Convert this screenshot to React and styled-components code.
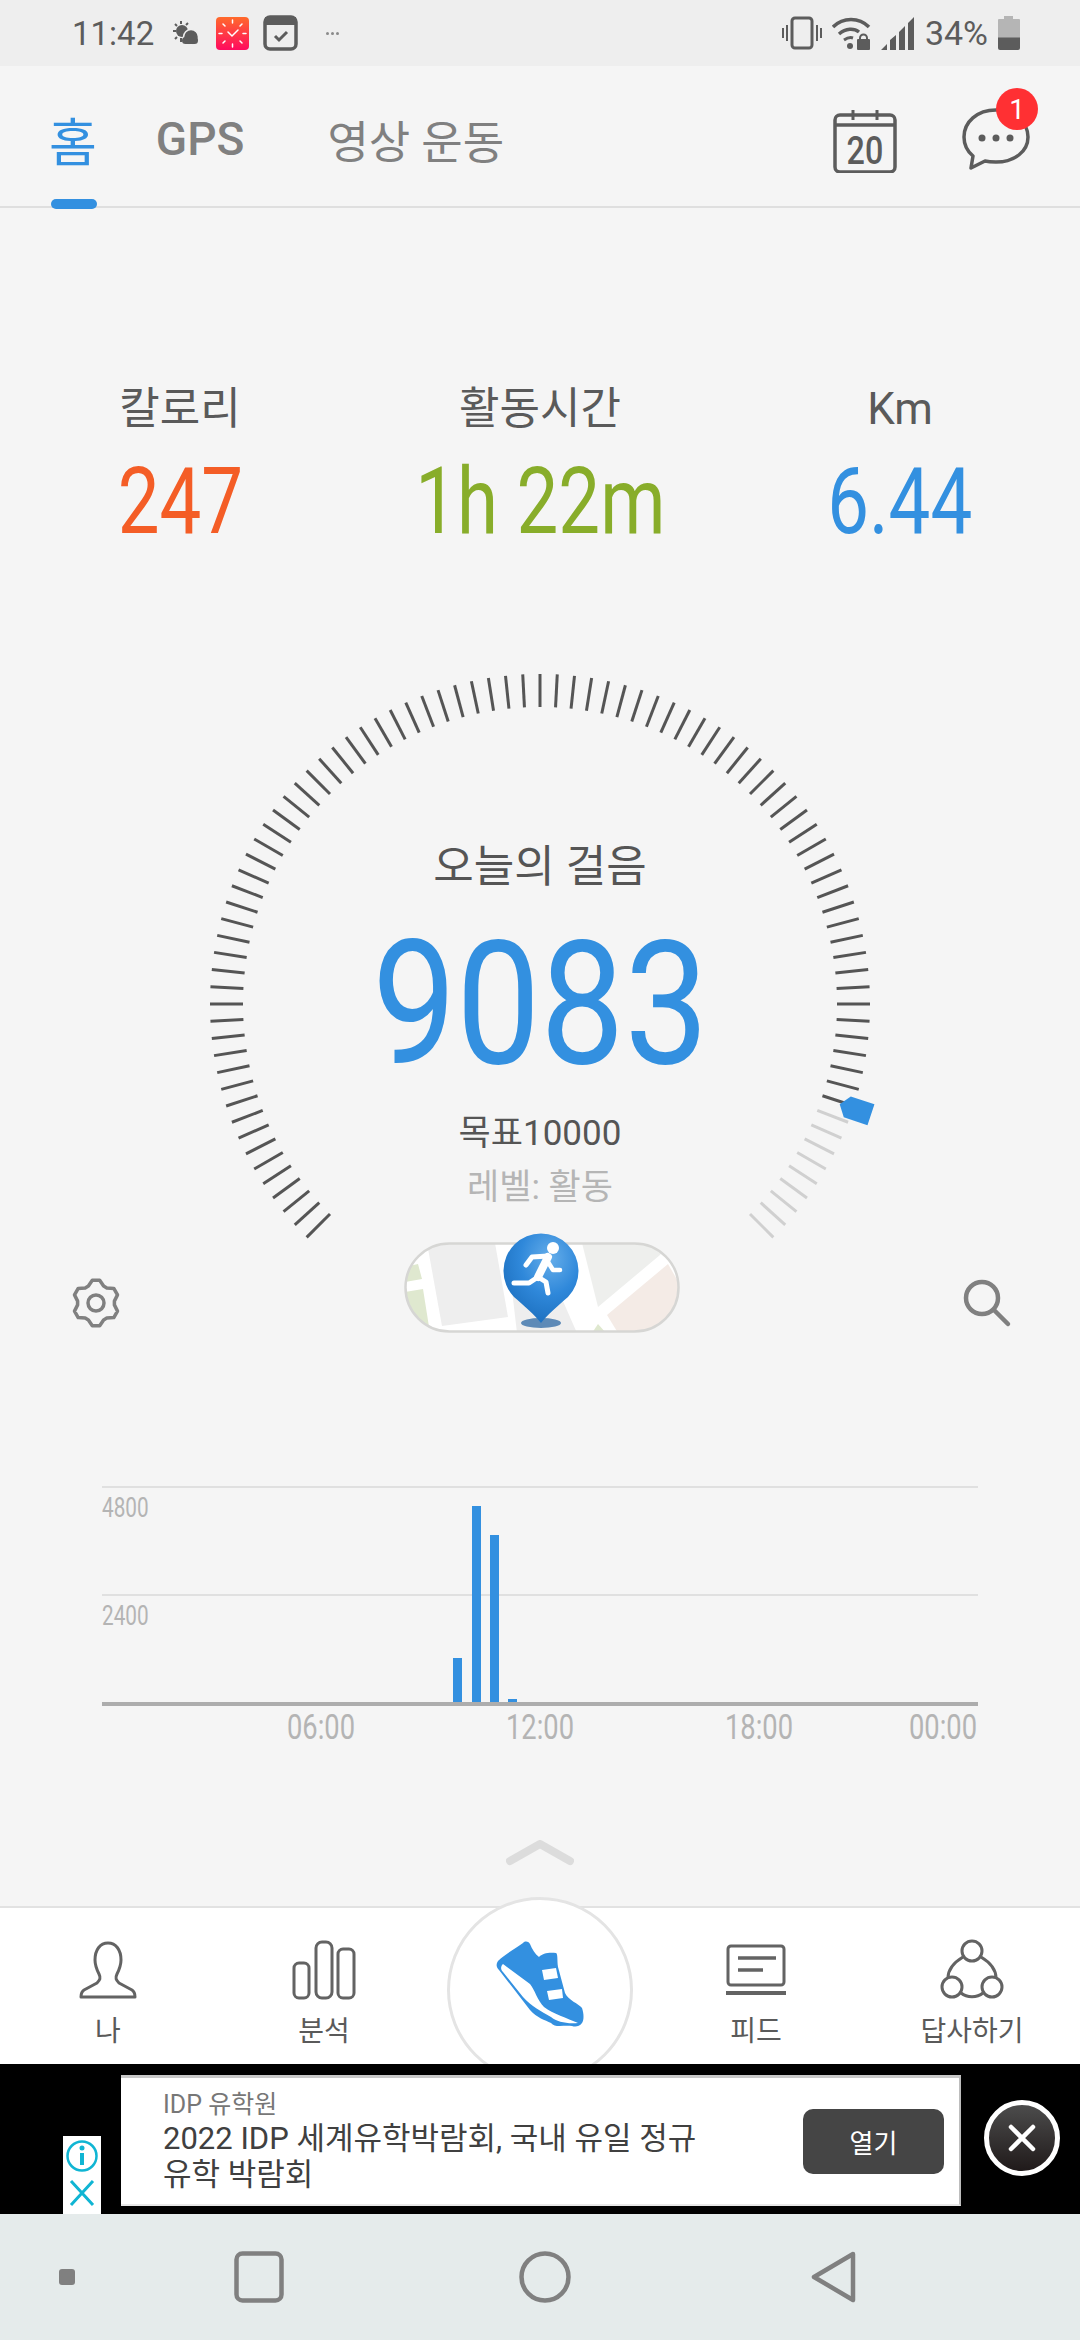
import React from "react"
import styled, { createGlobalStyle } from "styled-components"

const BLUE = "#3390e0"
const BARS = { 19: 44, 20: 196, 21: 167, 22: 3 }

const ticks = Array.from({ length: 91 }, (_, i) => i)

function gearPath() {
    // six soft teeth, like the settings cog in the app
    const pts = []
    for (let i = 0; i < 6; i++) {
        const a = (i * 60 - 90) * Math.PI / 180
        const step = 11 * Math.PI / 180
        pts.push([a - 2.2 * step, 18.5], [a - 0.85 * step, 23], [a + 0.85 * step, 23], [a + 2.2 * step, 18.5])
    }
    return pts.map(([a, r], i) => `${i ? "L" : "M"}${(25 + r * Math.cos(a)).toFixed(1)} ${(25 + r * Math.sin(a)).toFixed(1)}`).join(" ") + " Z"
}

export default function App() {
    return (
        <>
            <GlobalStyle />
            <Screen>
                <StatusBar>
                    <StatusGroup>
                        <Clock>11:42</Clock>
                        <svg width="28" height="26" viewBox="0 0 28 26" fill="#5c5c5c">
                            <circle cx="10" cy="11" r="6" />
                            <path d="M9 1v3M1 11h3M3 4l2 2M3 19l2-2M16 3l-2 2M9 18v4" stroke="#5c5c5c" strokeWidth="2" />
                            <circle cx="19" cy="17" r="7.5" stroke="#eee" strokeWidth="1.5" />
                            <rect x="10" y="17" width="16" height="7" rx="3.5" />
                        </svg>
                        <ClockApp>
                            <svg width="33" height="33" viewBox="0 0 33 33" fill="none" stroke="#fff" strokeLinecap="round">
                                <path d="M16.5 3v3M16.5 27v3M3 16.5h3M27 16.5h3M7 7l2 2M26 7l-2 2M7 26l2-2M26 26l-2-2" strokeWidth="1.5" />
                                <path d="M12 15l4 4 6-6" strokeWidth="1.5" />
                            </svg>
                        </ClockApp>
                        <svg width="35" height="36" viewBox="0 0 35 36" fill="none">
                            <rect x="2" y="2" width="31" height="32" rx="5" stroke="#5c5c5c" strokeWidth="3.5" />
                            <rect x="2" y="2" width="31" height="8" fill="#5c5c5c" />
                            <path d="M12 21l4 4 8-8" stroke="#5c5c5c" strokeWidth="3" />
                        </svg>
                        <MoreDots>
                            <span /><span /><span />
                        </MoreDots>
                    </StatusGroup>
                    <StatusGroup>
                        <svg width="40" height="34" viewBox="0 0 40 34" fill="none" stroke="#5c5c5c">
                            <rect x="10" y="2" width="20" height="30" rx="3" strokeWidth="3" />
                            <path d="M5 9v16M1 12v10M35 9v16M39 12v10" strokeWidth="2" />
                        </svg>
                        <svg width="39" height="34" viewBox="0 0 39 34" fill="none" stroke="#5c5c5c">
                            <path d="M1 11C11 1 27 1 37 11" strokeWidth="3.5" />
                            <path d="M7 18c7-6 15-6 20-2" strokeWidth="3.5" />
                            <path d="M12 24c3-2 6-3 9-2" strokeWidth="3" />
                            <circle cx="18" cy="30" r="3" fill="#5c5c5c" stroke="none" />
                            <rect x="25" y="23" width="13" height="11" rx="1" fill="#5c5c5c" stroke="none" />
                            <path d="M28 24v-2a3.500 3.500 0 0 1 7 0v2" strokeWidth="2" />
                        </svg>
                        <svg width="34" height="34" viewBox="0 0 34 34" fill="#5c5c5c">
                            <path d="M0 34l6-6v6zM9 34V24l6-5v15zM18 34V16l6-6v24zM27 34V7l6-6v33z" />
                        </svg>
                        <Percent>34%</Percent>
                        <svg width="22" height="34" viewBox="0 0 22 34">
                            <path d="M6 0h9v3h6a1 1 0 0 1 1 1v18H0V4a1 1 0 0 1 1-1h5z" fill="#b5b5b5" />
                            <path d="M0 21.500h22V32a2 2 0 0 1-2 2H2a2 2 0 0 1-2-2z" fill="#5c5c5c" />
                        </svg>
                    </StatusGroup>
                </StatusBar>

                <Header>
                    <Tab $active>홈</Tab>
                    <Tab $bold>GPS</Tab>
                    <Tab $wide>영상 운동</Tab>
                    <HeaderActions>
                        <CalendarIcon width="64" height="64" viewBox="0 0 64 64" fill="none" stroke="#5c5c5c" strokeWidth="3.5">
                            <path d="M7 6h50a5 5 0 0 1 5 5v47a5 5 0 0 1-5 5H7a5 5 0 0 1-5-5V11a5 5 0 0 1 5-5z" />
                            <path d="M2 16h60" />
                            <path d="M20 1v10M44 1v10" strokeWidth="3" />
                            <text x="37.600" y="55" textAnchor="middle" fill="#5c5c5c" stroke="none" fontFamily="Roboto" fontWeight="500" fontSize="38" transform="scale(.85 1)">20</text>
                        </CalendarIcon>
                        <ChatButton>
                            <svg width="68" height="62" viewBox="0 0 68 62" fill="none" stroke="#5c5c5c" strokeWidth="3.5">
                                <path d="M34 2C15 2 2 14 2 29c0 8 3 14 9 19l-2 12 14-7c4 1 7 1 11 1 19 0 32-11 32-25S53 2 34 2z" strokeLinejoin="round" />
                                <circle cx="20" cy="30" r="3.500" fill="#5c5c5c" stroke="none" />
                                <circle cx="34" cy="30" r="3.500" fill="#5c5c5c" stroke="none" />
                                <circle cx="48" cy="30" r="3.500" fill="#5c5c5c" stroke="none" />
                            </svg>
                            <Badge>1</Badge>
                        </ChatButton>
                    </HeaderActions>
                </Header>

                <Main>
                    <Stats>
                        <Stat>
                            <StatLabel>칼로리</StatLabel>
                            <StatValue $color="#f45d26">247</StatValue>
                        </Stat>
                        <Stat>
                            <StatLabel>활동시간</StatLabel>
                            <StatValue $color="#88ad2a">1h 22m</StatValue>
                        </Stat>
                        <Stat>
                            <StatLabel>Km</StatLabel>
                            <StatValue $color={BLUE}>6.44</StatValue>
                        </Stat>
                    </Stats>

                    <Gauge>
                        <GaugeDial width="720" height="720" viewBox="-360 -360 720 720">
                            {ticks.map(i => (
                                <line
                                    key={i}
                                    x1="0" y1="-297" x2="0" y2="-330"
                                    stroke={i <= 81 ? "#555555" : "#d0d0d0"}
                                    strokeWidth="3"
                                    transform={`rotate(${i * 3 - 135})`}
                                />
                            ))}
                            <polygon points="316,0 324,-11 349,-11 349,11 324,11" fill={BLUE} transform="rotate(18.5)" />
                        </GaugeDial>
                        <GaugeTitle>오늘의 걸음</GaugeTitle>
                        <StepCount>9083</StepCount>
                        <Goal>목표10000</Goal>
                        <Level>레벨: 활동</Level>
                        <ToolRow>
                            <IconSlot>
                                <svg width="50" height="50" viewBox="0 0 50 50" fill="none" stroke="#808080" strokeWidth="3.5" strokeLinejoin="round">
                                    <path d={gearPath()} />
                                    <circle cx="25" cy="25" r="8" />
                                </svg>
                            </IconSlot>
                            <svg width="276" height="102" viewBox="0 0 276 102">
                                <defs>
                                    <clipPath id="pill"><rect x="1" y="11" width="274" height="89" rx="44" /></clipPath>
                                    <radialGradient id="pin" cx="0.62" cy="0.28" r="0.8">
                                        <stop offset="0" stopColor="#66aeea" />
                                        <stop offset="0.5" stopColor="#2f88da" />
                                        <stop offset="1" stopColor="#1a6cbb" />
                                    </radialGradient>
                                </defs>
                                <g clipPath="url(#pill)">
                                    <rect x="0" y="10" width="276" height="92" fill="#fff" />
                                    <g transform="translate(1 11)">
                                        <polygon points="22,0 90,0 103,74 37,83" fill="#eeeeee" />
                                        <polygon points="0,24 13,21 17,36 0,39" fill="#dfe8cf" />
                                        <polygon points="0,49 18,46 25,90 0,90" fill="#dfe8cf" />
                                        <polygon points="177,0 263,0 255,12 193,64" fill="#eeefed" />
                                        <polygon points="263,21 274,40 274,90 213,90 202,72" fill="#f4ebe6" />
                                        <polygon points="105,30 150,40 172,90 112,90" fill="#eeeeee" />
                                        <polygon points="187,90 193,81 201,90" fill="#dfe8cf" />
                                    </g>
                                </g>
                                <rect x="1.500" y="11.500" width="273" height="88" rx="44" fill="none" stroke="#d6d6d4" strokeWidth="2.5" />
                                <ellipse cx="137" cy="91" rx="20" ry="5" fill="#1f5f9f" opacity="0.7" />
                                <path d="M137 91C132 84 118 72 110 65A37.500 37.500 0 1 1 164 65C156 72 142 84 137 91Z" fill="url(#pin)" />
                                <g fill="none" stroke="#fff" strokeLinecap="round" strokeLinejoin="round">
                                    <circle cx="149" cy="16" r="6" fill="#fff" stroke="none" />
                                    <path d="M144 25L134 45" strokeWidth="8" />
                                    <path d="M122 33L128 25L144 24" strokeWidth="5" />
                                    <path d="M144 30L149 38L156 38" strokeWidth="4.500" />
                                    <path d="M134 45L125 51L110 51" strokeWidth="5" />
                                    <path d="M134 45L142 50L144 61" strokeWidth="5" />
                                </g>
                            </svg>
                            <IconSlot>
                                <svg width="50" height="50" viewBox="0 0 50 50" fill="none" stroke="#808080" strokeWidth="4.500" strokeLinecap="round">
                                    <circle cx="20" cy="20" r="16" />
                                    <path d="M32 32l14 14" />
                                </svg>
                            </IconSlot>
                        </ToolRow>
                    </Gauge>

                    <Chart>
                        <Plot>
                            <PlotRow><AxisValue>4800</AxisValue></PlotRow>
                            <PlotRow><AxisValue>2400</AxisValue></PlotRow>
                            <BarLayer>
                                {Array.from({ length: 48 }, (_, i) => (
                                    <BarSlot key={i}>
                                        {BARS[i] ? <Bar $h={BARS[i]} /> : null}
                                    </BarSlot>
                                ))}
                            </BarLayer>
                        </Plot>
                        <TimeAxis>
                            <TimeCell>06:00</TimeCell>
                            <TimeCell>12:00</TimeCell>
                            <TimeCell>18:00</TimeCell>
                            <TimeCell $last>00:00</TimeCell>
                        </TimeAxis>
                    </Chart>

                    <Chevron>
                        <svg width="68" height="26" viewBox="0 0 68 26" fill="none" stroke="#dcdcdc" strokeWidth="8" strokeLinecap="round" strokeLinejoin="round">
                            <path d="M4 21L34 4L64 21" />
                        </svg>
                    </Chevron>
                </Main>

                <BottomNav>
                    <NavItem>
                        <NavIcon>
                            <svg width="58" height="58" viewBox="0 0 58 58" fill="none" stroke="#636363" strokeWidth="3">
                                <path d="M29 2c-8 0-13 7-13 17 0 6 2 10 4 14 2 4 1 6-2 9L5 49c-3 2-3 4-3 7h54c0-3 0-5-3-7l-13-7c-3-3-4-5-2-9 2-4 4-8 4-14C42 9 37 2 29 2z" strokeLinejoin="round" />
                            </svg>
                        </NavIcon>
                        <NavLabel>나</NavLabel>
                    </NavItem>
                    <NavItem>
                        <NavIcon>
                            <svg width="64" height="60" viewBox="0 0 64 60" fill="none" stroke="#636363" strokeWidth="3">
                                <rect x="2" y="23" width="15" height="35" rx="5" />
                                <rect x="24" y="2" width="16" height="56" rx="6" />
                                <rect x="46" y="9" width="16" height="49" rx="5" />
                            </svg>
                        </NavIcon>
                        <NavLabel>분석</NavLabel>
                    </NavItem>
                    <NavItem>
                        <RingButton />
                        <ShoeIcon width="90" height="90" viewBox="0 0 90 90">
                            <path d="M28 3C30 1 33 1 35 4C37 9 40 14 44 17C47 13 55 12 61 13C63 14 62 20 63 27L70 53C73 60 84 64 87 68C89 74 89 80 87 83C84 87 80 87 77 86C68 85 60 88 56 83C50 80 42 78 35 70L4 30C1 27 1 24 3 21C10 14 20 9 28 3Z" fill={BLUE} />
                            <path d="M8 24L35 44C40 50 42 60 49 67C58 74 72 78 83 83C72 84 62 82 56 77C47 72 36 66 28 57L8 32C5 29 6 26 8 24Z" fill="#fff" />
                            <path d="M47 30L61 28L63 38L49 40Z M52 51L67 49L68 58L54 60Z" fill="#fff" />
                        </ShoeIcon>
                    </NavItem>
                    <NavItem>
                        <NavIcon>
                            <svg width="60" height="52" viewBox="0 0 60 52" fill="none" stroke="#636363" strokeWidth="3">
                                <rect x="2" y="2" width="56" height="39" rx="3" />
                                <path d="M12 14h38" strokeWidth="3.500" />
                                <path d="M12 26h25" strokeWidth="3.500" />
                                <path d="M0 49h60" strokeWidth="4" />
                            </svg>
                        </NavIcon>
                        <NavLabel>피드</NavLabel>
                    </NavItem>
                    <NavItem>
                        <NavIcon>
                            <svg width="66" height="62" viewBox="0 0 66 62" fill="none" stroke="#636363" strokeWidth="3">
                                <circle cx="33" cy="12" r="10" />
                                <circle cx="13" cy="48" r="10" />
                                <circle cx="53" cy="48" r="10" />
                                <path d="M24 18C14 24 9 32 9 39M42 18C52 24 57 32 57 39M22 54C28 59 38 59 44 54" />
                            </svg>
                        </NavIcon>
                        <NavLabel>답사하기</NavLabel>
                    </NavItem>
                </BottomNav>

                <AdBar>
                    <AdInfo>
                        <svg width="34" height="34" viewBox="0 0 34 34" fill="none" stroke="#10b5d3" strokeWidth="2.500">
                            <circle cx="17" cy="17" r="14.500" />
                            <path d="M17 14v12" strokeWidth="4" />
                            <circle cx="17" cy="9" r="2.500" fill="#10b5d3" stroke="none" />
                        </svg>
                        <svg width="28" height="28" viewBox="0 0 28 28" fill="none" stroke="#10b5d3" strokeWidth="3">
                            <path d="M3 2l22 24M25 2L3 26" />
                        </svg>
                    </AdInfo>
                    <AdCard>
                        <AdCopy>
                            <AdSource>IDP 유학원</AdSource>
                            <AdTitle>2022 IDP 세계유학박람회, 국내 유일 정규<br />유학 박람회</AdTitle>
                        </AdCopy>
                        <AdButton>열기</AdButton>
                    </AdCard>
                    <AdClose>
                        <svg width="36" height="36" viewBox="0 0 36 36" fill="none" stroke="#fff" strokeWidth="4.500" strokeLinecap="round">
                            <path d="M7 7l22 22M29 7L7 29" />
                        </svg>
                    </AdClose>
                </AdBar>

                <SystemNav>
                    <RecentDot />
                    <svg width="50" height="52" viewBox="0 0 50 52" fill="none" stroke="#808080" strokeWidth="4.500">
                        <rect x="2.500" y="2.500" width="45" height="47" rx="6" />
                    </svg>
                    <svg width="52" height="52" viewBox="0 0 52 52" fill="none" stroke="#808080" strokeWidth="4.500">
                        <circle cx="26" cy="26" r="23.500" />
                    </svg>
                    <svg width="46" height="52" viewBox="0 0 46 52" fill="none" stroke="#808080" strokeWidth="4.500" strokeLinejoin="round">
                        <path d="M42 3L3 26L42 49Z" />
                    </svg>
                </SystemNav>
            </Screen>
        </>
    )
}

const GlobalStyle = createGlobalStyle`
    html, body {
        margin: 0;
        padding: 0;
    }
    body {
        background: #f5f5f5;
        font-family: Roboto, "Noto Sans CJK KR", sans-serif;
    }
`
const Screen = styled.div`
    width: 1080px;
    height: 2340px;
    display: flex;
    flex-direction: column;
    overflow: hidden;
    background: #f5f5f5;
`
const StatusBar = styled.div`
    height: 66px;
    flex: none;
    padding: 0 60px 0 72px;
    display: flex;
    justify-content: space-between;
    align-items: center;
    background: #eeeeee;
    color: #5c5c5c;
`
const StatusGroup = styled.div`
    display: flex;
    align-items: center;
    gap: 10px;
`
const Clock = styled.span`
    font-size: 33px;
    margin-right: 8px;
`
const ClockApp = styled.div`
    width: 33px;
    height: 33px;
    margin: 0 4px 0 6px;
    border-radius: 4px;
    background: linear-gradient(#ff6a2b, #ff0a5f);
`
const MoreDots = styled.div`
    display: flex;
    gap: 2px;
    margin-left: 18px;
    span {
        width: 3px;
        height: 3px;
        border-radius: 50%;
        background: #8a8a8a;
    }
`
const Percent = styled.span`
    font-size: 34px;
`
const Header = styled.div`
    height: 142px;
    flex: none;
    box-sizing: border-box;
    padding: 6px 50px 0 49px;
    display: flex;
    align-items: center;
    gap: 59px;
    background: #f5f5f5;
    border-bottom: 2px solid #dfdfdf;
`
const Tab = styled.div`
    position: relative;
    font-size: ${props => props.$active ? "52px" : props.$wide ? "45px" : "46px"};
    font-weight: ${props => props.$bold ? 500 : 400};
    margin-left: ${props => props.$wide ? "24px" : "0"};
    color: ${props => props.$active ? BLUE : "#808080"};
    &::after {
        content: "";
        display: ${props => props.$active ? "block" : "none"};
        position: absolute;
        left: 2px;
        bottom: -32px;
        width: 46px;
        height: 10px;
        border-radius: 5px;
        background: ${BLUE};
    }
`
const HeaderActions = styled.div`
    margin-left: auto;
    display: flex;
    align-items: center;
    gap: 65px;
`
const CalendarIcon = styled.svg`
    margin-top: 3px;
`
const ChatButton = styled.div`
    position: relative;
    height: 62px;
`
const Badge = styled.div`
    position: absolute;
    top: -20px;
    right: -8px;
    width: 42px;
    height: 42px;
    border-radius: 50%;
    display: flex;
    align-items: center;
    justify-content: center;
    background: #ff3033;
    color: #ffffff;
    font-size: 28px;
`
const Main = styled.div`
    flex: 1;
    padding-top: 176px;
    display: flex;
    flex-direction: column;
    min-height: 0;
`
const Stats = styled.div`
    display: grid;
    grid-template-columns: repeat(3, 360px);
`
const Stat = styled.div`
    display: flex;
    flex-direction: column;
    align-items: center;
`
const StatLabel = styled.div`
    height: 50px;
    line-height: 50px;
    font-size: 44px;
    color: #5a5a5a;
`
const StatValue = styled.div`
    margin-top: 23px;
    height: 90px;
    line-height: 90px;
    font-size: 93px;
    white-space: nowrap;
    color: ${props => props.$color};
    transform: scaleX(0.8);
`
const Gauge = styled.div`
    position: relative;
    margin-top: 127px;
    padding-top: 165px;
    display: flex;
    flex-direction: column;
    align-items: center;
`
const GaugeDial = styled.svg`
    position: absolute;
    top: -30px;
    left: 180px;
`
const GaugeTitle = styled.div`
    position: relative;
    height: 56px;
    line-height: 56px;
    font-size: 44px;
    color: #555555;
`
const StepCount = styled.div`
    position: relative;
    margin-top: 29px;
    height: 160px;
    line-height: 160px;
    font-size: 172px;
    color: ${BLUE};
    transform: scaleX(0.87);
`
const Goal = styled.div`
    position: relative;
    margin-top: 28px;
    height: 44px;
    line-height: 44px;
    font-size: 35px;
    color: #555555;
`
const Level = styled.div`
    position: relative;
    margin-top: 10px;
    height: 44px;
    line-height: 44px;
    font-size: 35px;
    color: #b5b5b5;
`
const ToolRow = styled.div`
    position: relative;
    margin-top: 22px;
    width: 100%;
    box-sizing: border-box;
    padding: 0 68px 0 71px;
    display: flex;
    justify-content: space-between;
    align-items: flex-start;
`
const IconSlot = styled.div`
    margin-top: 46px;
`
const Chart = styled.div`
    margin: 152px 102px 0;
`
const Plot = styled.div`
    position: relative;
    border-bottom: 4px solid #adadad;
`
const PlotRow = styled.div`
    height: 106px;
    border-top: 2px solid #e0e0e0;
`
const AxisValue = styled.div`
    margin-top: 2px;
    height: 36px;
    line-height: 36px;
    font-size: 28px;
    color: #b4b4b4;
    transform: scaleX(0.74);
    transform-origin: left center;
`
const BarLayer = styled.div`
    position: absolute;
    inset: 0;
    display: flex;
    align-items: flex-end;
`
const BarSlot = styled.div`
    flex: 1;
    display: flex;
    justify-content: center;
`
const Bar = styled.div`
    width: 9px;
    height: ${props => props.$h}px;
    background: ${BLUE};
`
const TimeAxis = styled.div`
    display: grid;
    grid-template-columns: repeat(4, 1fr);
    margin-top: 2px;
`
const TimeCell = styled.div`
    height: 40px;
    line-height: 40px;
    font-size: 35px;
    color: #b4b4b4;
    text-align: right;
    white-space: nowrap;
    transform: scaleX(0.78);
    transform-origin: right center;
    margin-right: ${props => props.$last ? "1px" : "-34px"};
`
const Chevron = styled.div`
    margin-top: 92px;
    display: flex;
    justify-content: center;
`
const BottomNav = styled.div`
    position: relative;
    z-index: 1;
    height: 158px;
    flex: none;
    box-sizing: border-box;
    display: grid;
    grid-template-columns: repeat(5, 216px);
    background: #ffffff;
    border-top: 2px solid #e2e2e2;
`
const NavItem = styled.div`
    position: relative;
    display: flex;
    flex-direction: column;
    align-items: center;
`
const NavIcon = styled.div`
    height: 62px;
    margin-top: 31px;
    display: flex;
    align-items: center;
    justify-content: center;
`
const NavLabel = styled.div`
    margin-top: 13px;
    height: 36px;
    line-height: 36px;
    font-size: 28px;
    color: #5a5a5a;
`
const RingButton = styled.div`
    position: absolute;
    top: -11px;
    left: 15px;
    width: 186px;
    height: 186px;
    box-sizing: border-box;
    border-radius: 50%;
    background: #ffffff;
    border: 3px solid #e4e4e4;
`
const ShoeIcon = styled.svg`
    position: relative;
    margin-top: 32px;
`
const AdBar = styled.div`
    position: relative;
    z-index: 2;
    height: 150px;
    flex: none;
    box-sizing: border-box;
    padding-left: 63px;
    display: flex;
    background: #000000;
`
const AdInfo = styled.div`
    align-self: flex-end;
    width: 38px;
    height: 78px;
    margin-right: 20px;
    display: flex;
    flex-direction: column;
    align-items: center;
    gap: 6px;
    padding-top: 3px;
    box-sizing: border-box;
    background: #ffffff;
`
const AdCard = styled.div`
    width: 840px;
    height: 131px;
    margin-top: 11px;
    box-sizing: border-box;
    padding: 0 15px 0 42px;
    display: flex;
    align-items: center;
    justify-content: space-between;
    background: #ffffff;
    border-top: 3px solid #c8c8c8;
    border-right: 2px solid #bdbdbd;
    border-bottom: 2px solid #e8e8e8;
`
const AdCopy = styled.div`
    color: #444444;
`
const AdSource = styled.div`
    height: 32px;
    line-height: 32px;
    font-size: 25px;
    color: #777777;
`
const AdTitle = styled.div`
    font-size: 31px;
    line-height: 36px;
    color: #404040;
`
const AdButton = styled.div`
    width: 141px;
    height: 65px;
    border-radius: 10px;
    display: flex;
    align-items: center;
    justify-content: center;
    background: #454545;
    color: #ffffff;
    font-size: 26px;
`
const AdClose = styled.div`
    width: 76px;
    height: 76px;
    margin: 36px 0 0 23px;
    box-sizing: border-box;
    border-radius: 50%;
    display: flex;
    align-items: center;
    justify-content: center;
    border: 5px solid #ffffff;
    background: linear-gradient(#4c4c4c, #201a1a);
`
const SystemNav = styled.div`
    height: 126px;
    flex: none;
    box-sizing: border-box;
    padding-left: 59px;
    display: grid;
    grid-template-columns: 175px 285px 292px auto;
    align-items: center;
    background: #e5ebeb;
`
const RecentDot = styled.div`
    width: 16px;
    height: 16px;
    border-radius: 3px;
    background: #808080;
`
